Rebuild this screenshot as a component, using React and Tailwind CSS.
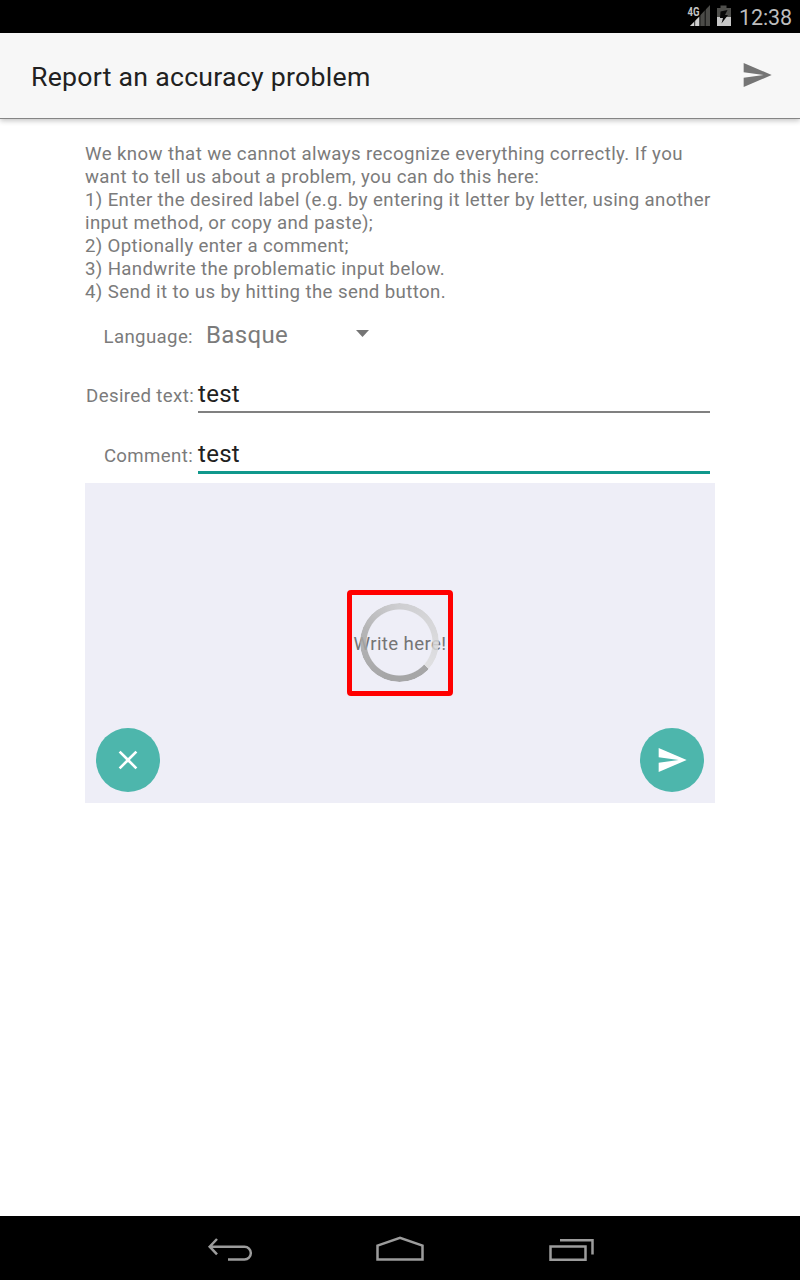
const INTRO = [
  { text: 'We know that we cannot always recognize everything correctly. If you', tracking: 'tracking-[0.39px]' },
  { text: 'want to tell us about a problem, you can do this here:', tracking: 'tracking-[0.35px]' },
  { text: '1) Enter the desired label (e.g. by entering it letter by letter, using another', tracking: 'tracking-[0.35px]' },
  { text: 'input method, or copy and paste);', tracking: 'tracking-[0.35px]' },
  { text: '2) Optionally enter a comment;', tracking: 'tracking-[0.31px]' },
  { text: '3) Handwrite the problematic input below.', tracking: 'tracking-[0.35px]' },
  { text: '4) Send it to us by hitting the send button.', tracking: 'tracking-[0.38px]' },
];

function SendIcon({ className }) {
  return (
    <svg className={className} width="32" height="32" viewBox="0 0 24 24" fill="currentColor">
      <path d="M2 21 23 12 2 3v7l15 2-15 2z" />
    </svg>
  );
}

function StatusBar() {
  return (
    <div className="flex h-[33px] items-start justify-end bg-black pr-2">
      <svg className="shrink-0" width="48" height="33" viewBox="0 0 48 33">
        <path d="M24 5V26H4z" fill="#4b4b48" />
        <path d="M4 26 13.500 16.500V26z" fill="#d0d0d0" />
        <path d="M8.700 14v13M13.900 9v18M19.200 5v22" stroke="#000" strokeWidth="0.800" />
        <path d="M0 4h13.500v12.500H0z" fill="#000" />
        <text x="1.500" y="15.500" fill="#c4c4c4" fontSize="13.500" fontWeight="700" fontFamily="Roboto, sans-serif" textLength="12" lengthAdjust="spacingAndGlyphs">4G</text>
        <path d="M34.500 5.500h6V8H45v9H31V8h3.500z" fill="#4f4f4c" />
        <path d="M31 17h14v9H31z" fill="#c8c8c8" />
        <path d="m41.500 10-7 1.500L34 18h3l-1.500 5.500 6.500-8.500h-3z" fill="#080808" />
      </svg>
      <span className="ml-[5px] w-[53px] whitespace-nowrap text-[21.500px] leading-[35px] tracking-[-0.1px] text-[#bdbdbd]">12:38</span>
    </div>
  );
}

function Field({ label, labelClass, lineClass }) {
  return (
    <div className="flex h-[60px] items-start">
      <span className={`w-[113px] shrink-0 whitespace-nowrap pt-[11px] text-right text-[18.670px] leading-[24px] tracking-[0.35px] text-[#7b7b7b] ${labelClass}`}>{label}</span>
      <div className={`w-[512px] text-[24px] leading-[42px] tracking-[0.3px] text-[#212121] ${lineClass}`}>test</div>
    </div>
  );
}

export default function App() {
  return (
    <div className="flex h-[1280px] w-[800px] flex-col overflow-hidden bg-white font-['Roboto',sans-serif]">
      <StatusBar />
      <header className="z-10 flex h-[86px] shrink-0 items-center justify-between border-b border-[#858585] bg-[#f7f7f7] pl-[31px] pr-[27px] shadow-[0_2px_5px_rgba(0,0,0,0.22)]">
        <h1 className="whitespace-nowrap pt-[2px] text-[26.670px] tracking-[0.26px] text-[#212121]">Report an accuracy problem</h1>
        <SendIcon className="mb-[1px] text-[#757575]" />
      </header>
      <main className="flex flex-1 flex-col pl-[85px] pt-[24px]">
        <div className="text-[18.670px] leading-[23px] text-[#7b7b7b]">
          {INTRO.map(({ text, tracking }) => (
            <p key={text} className={`whitespace-nowrap ${tracking}`}>{text}</p>
          ))}
        </div>
        <div className="flex h-[69px] items-start pt-[19px]">
          <span className="w-[108px] pt-[2px] text-right text-[18.670px] leading-[24px] tracking-[0.35px] text-[#7b7b7b]">Language:</span>
          <span className="ml-[13px] w-[150px] text-[24px] leading-[25px] tracking-[0.35px] text-[#7b7b7b]">Basque</span>
          <svg className="mt-[7px]" width="13" height="7" viewBox="0 0 13 7">
            <path d="M0 0h13L6.500 7z" fill="#757575" />
          </svg>
        </div>
        <Field label="Desired text:" labelClass="pr-[4px]" lineClass="h-[40px] border-b-2 border-[#808080]" />
        <Field label="Comment:" labelClass="pr-[5px]" lineClass="h-[41px] border-b-3 border-[#10988c]" />
        <section className="relative -mt-[10px] flex h-[320px] w-[630px] items-end justify-between bg-[#eeeef7] px-[11px] pb-[11px]">
          <button className="flex size-16 items-center justify-center rounded-full bg-[#4db6ac] text-white">
            <svg width="32" height="32" viewBox="0 0 24 24" fill="currentColor">
              <path d="M19 6.410 17.590 5 12 10.590 6.410 5 5 6.410 10.590 12 5 17.590 6.410 19 12 13.410 17.590 19 19 17.590 13.410 12z" />
            </svg>
          </button>
          <button className="flex size-16 items-center justify-center rounded-full bg-[#4db6ac] text-white">
            <SendIcon />
          </button>
          <div className="absolute left-[262px] top-[107px] flex h-[106px] w-[106px] items-center justify-center rounded-[4px] border-[5px] border-[#ff0000]">
            <span className="whitespace-nowrap pt-px text-[18.670px] leading-6 tracking-[0.37px] text-[#757575]">Write here!</span>
            <div className="absolute left-[8px] top-[8px] size-[79px] rounded-full bg-[conic-gradient(from_132deg,#9a9a9a_0deg,#9a9a9a_70deg,#acacac_160deg,#c9c9cb_225deg,#dededf_360deg)] opacity-85 [mask:radial-gradient(circle,transparent_32.500px,black_33.500px)]" />
          </div>
        </section>
      </main>
      <nav className="flex h-16 shrink-0 items-center bg-black">
        <svg width="800" height="64" viewBox="0 1216 800 64" fill="none" stroke="#9c9c9c" strokeWidth="2.500">
          <path d="M217 1239l-7.300 7.700 7.300 7.700M210 1246.700h34.500a6.250 6.250 0 0 1 0 12.700H228" />
          <path d="M377.500 1245.600 400 1237.800l22.500 7.800v14H377.500z" />
          <path d="M550.500 1246.500h35v13.200h-35zM560 1240.200h32.500v14.300" />
        </svg>
      </nav>
    </div>
  );
}
